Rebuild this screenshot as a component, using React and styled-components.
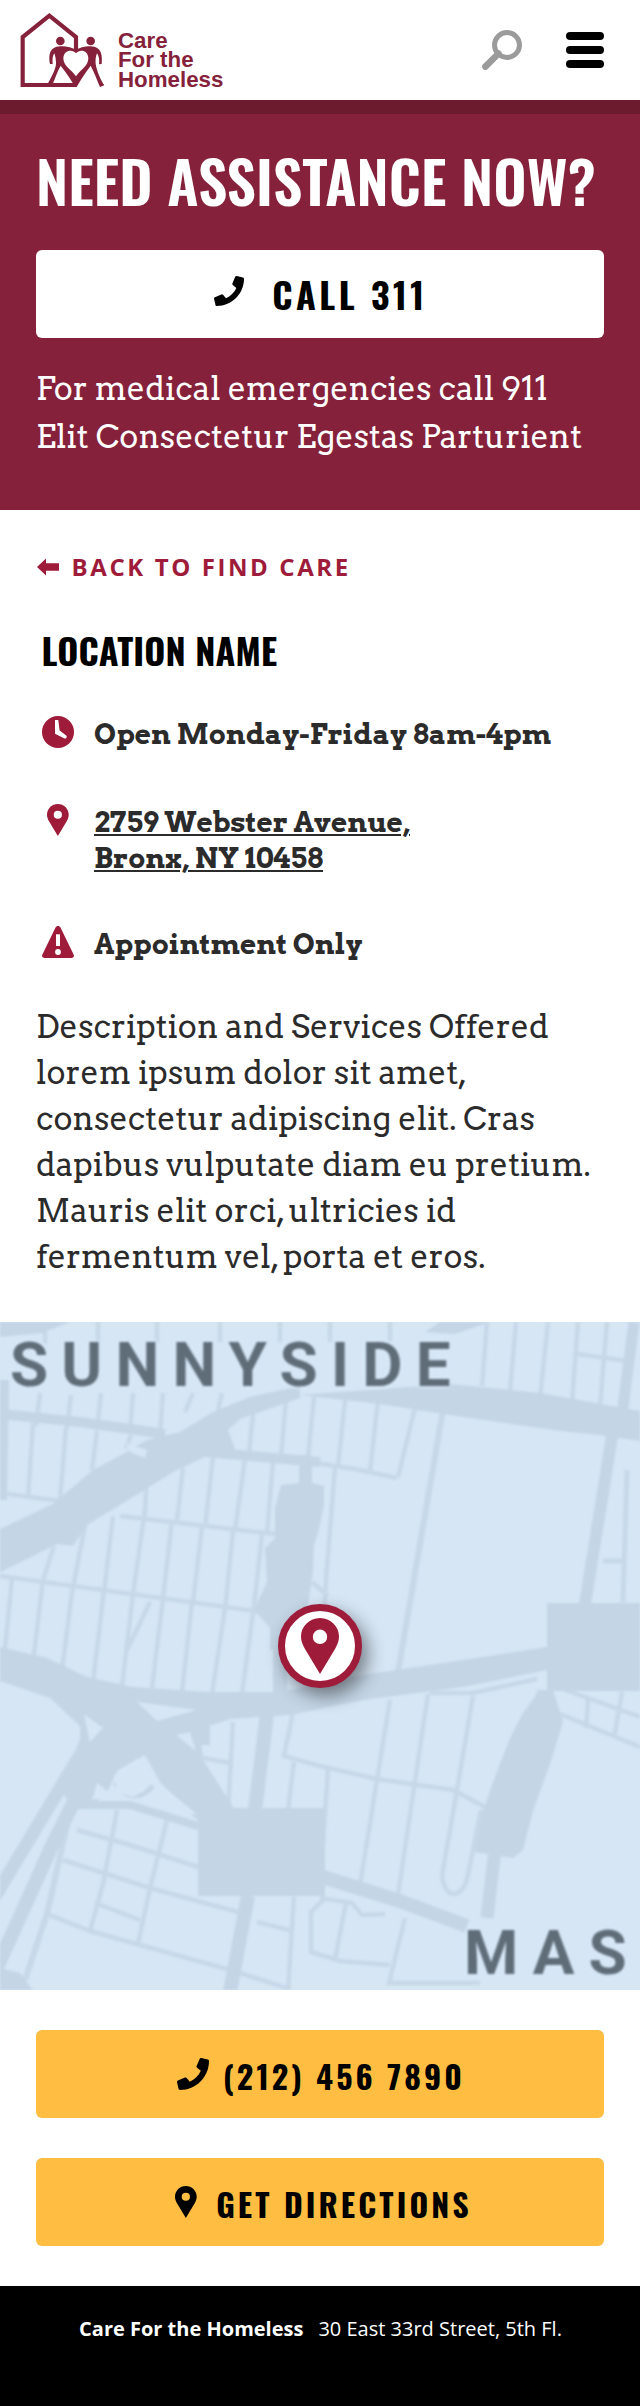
import React from "react";
import styled, { createGlobalStyle, ThemeProvider } from "styled-components";
import { FaPhone } from "react-icons/fa";

const theme = {
  maroon: "#85213a",
  maroonDark: "#6c1b2f",
  crimson: "#9e1b3a",
  gold: "#ffbe41",
  ink: "#2b2b2b",
  display: 'Oswald, "Liberation Sans Narrow", Roboto, sans-serif',
  slab: 'Arvo, "DejaVu Serif", serif',
  sans: '"Open Sans", "Noto Sans", sans-serif',
};

const GlobalStyle = createGlobalStyle`
  *, *::before, *::after { box-sizing: border-box; }
  body { margin: 0; background: #fff; }
  h1, h2, p, ul { margin: 0; padding: 0; }
  a { color: inherit; text-decoration: none; }
  svg { display: block; flex: none; }
`;

const Page = styled.div`
  width: 640px;
  display: flex;
  flex-direction: column;
`;

/* Header */
const Header = styled.header`
  height: 100px;
  padding: 0 36px 0 20px;
  display: flex;
  justify-content: space-between;
`;
const Brand = styled.a`
  display: flex;
  gap: 13px;
  color: ${(p) => p.theme.maroon};
`;
const BrandName = styled.span`
  padding-top: 30.5px;
  font: 700 22.3px/19.5px "Liberation Sans", Arial, sans-serif;
`;
const BrandLine = styled.span`
  display: block;
`;
const HeaderTools = styled.div`
  display: flex;
  align-items: center;
  gap: 44px;
`;
const IconButton = styled.button`
  padding: 0;
  border: 0;
  background: none;
`;
const MenuBars = styled.span`
  width: 38px;
  display: flex;
  flex-direction: column;
  gap: 5.5px;
`;
const MenuBar = styled.span`
  height: 8.4px;
  border-radius: 4.2px;
  background: #000;
`;

/* Assistance banner */
const Banner = styled.section`
  height: 410px;
  padding: 23px 36px 0;
  border-top: 14px solid ${(p) => p.theme.maroonDark};
  background: ${(p) => p.theme.maroon};
  color: #fff;
`;
const BannerTitle = styled.h1`
  font: 600 58px/86px ${(p) => p.theme.display};
  letter-spacing: 0.1px;
  white-space: nowrap;
`;
const BannerText = styled.p`
  margin-top: 27px;
  font: 400 32px/48px ${(p) => p.theme.slab};
`;

/* Buttons */
const Button = styled.a`
  height: 88px;
  padding-left: 2px;
  display: flex;
  align-items: center;
  justify-content: center;
  gap: ${(p) => (p.$call ? "28px" : "14px")};
  margin-top: ${(p) => (p.$call ? "27px" : "0")};
  border-radius: 6px;
  background: ${(p) => (p.$call ? "#fff" : p.theme.gold)};
  color: #000;
  font-family: ${(p) => p.theme.display};
  font-weight: 700;
  font-size: ${(p) => (p.$call ? "36px" : "32px")};
  letter-spacing: ${(p) => (p.$call ? "3.5px" : "3.1px")};
  white-space: nowrap;
`;
const ButtonIcon = styled.span`
  width: ${(p) => (p.$call ? "30px" : "32px")};
  display: flex;
  justify-content: center;
  padding-bottom: ${(p) => (p.$call ? "6px" : "0")};
`;
const ButtonLabel = styled.span`
  padding-top: ${(p) => (p.$call ? "0" : "3px")};
  padding-bottom: ${(p) => (p.$call ? "2px" : "0")};
`;

/* Location details */
const Details = styled.main`
  height: 812px;
  padding: 40px 36px 0;
  color: ${(p) => p.theme.ink};
`;
const BackLink = styled.a`
  display: flex;
  align-items: center;
  gap: 12.5px;
  padding-left: 1px;
  color: ${(p) => p.theme.crimson};
  font: 700 24px/33px ${(p) => p.theme.sans};
  letter-spacing: 2.6px;
`;
const LocationTitle = styled.h2`
  margin-top: 40px;
  padding-left: 5.5px;
  color: #000;
  font: 700 36px/54px ${(p) => p.theme.display};
  letter-spacing: 0.15px;
`;
const Facts = styled.ul`
  margin-top: 39px;
  padding-left: 6px;
  list-style: none;
`;
const Fact = styled.li`
  display: flex;
  gap: 20px;
  font: 700 28px/36px ${(p) => p.theme.slab};
  & + & { margin-top: 52px; }
  &:last-child { margin-top: 50px; }
`;
const FactIcon = styled.span`
  width: 32px;
  height: 32px;
  display: flex;
  justify-content: center;
  color: ${(p) => p.theme.crimson};
`;
const AddressLink = styled.a`
  text-decoration: underline;
  text-decoration-thickness: 2px;
  text-underline-offset: 2px;
`;
const Description = styled.p`
  margin-top: 42px;
  font: 400 32px/46px ${(p) => p.theme.slab};
`;

/* Map */
const Map = styled.section`
  position: relative;
  height: 668px;
  overflow: hidden;
  background: #d6e6f5;
`;
const Streets = styled.svg`
  filter: blur(1px);
`;
const MapLabel = styled.span`
  position: absolute;
  left: ${(p) => p.$x}px;
  top: ${(p) => p.$y}px;
  color: #5f6d79;
  font: 700 62px/62px Roboto, sans-serif;
  letter-spacing: ${(p) => p.$track}px;
  text-shadow: 0 0 5px #d6e6f5, 0 0 5px #d6e6f5;
  filter: blur(1.2px);
  white-space: nowrap;
`;
const Marker = styled.div`
  position: absolute;
  left: 278px;
  top: 282px;
  width: 84px;
  height: 84px;
  display: flex;
  align-items: center;
  justify-content: center;
  border: 7px solid ${(p) => p.theme.crimson};
  border-radius: 50%;
  background: #fff;
  color: ${(p) => p.theme.crimson};
  box-shadow: 6px 8px 18px rgba(0, 0, 0, 0.45);
`;

const Actions = styled.section`
  padding: 40px 36px;
  display: flex;
  flex-direction: column;
  gap: 40px;
`;

const Footer = styled.footer`
  height: 120px;
  padding: 29px 0 0 1px;
  display: flex;
  justify-content: center;
  gap: 15px;
  background: #000;
  color: #fff;
  font: 400 20px/28px ${(p) => p.theme.sans};
`;
const FooterName = styled.strong`
  font-weight: 700;
`;

const LogoMark = () => (
  <svg width="85" height="100" viewBox="60 0 255 300" fill="currentColor">
    <path
      d="M228 158V111L148 47 68 111V255H228"
      fill="none"
      stroke="currentColor"
      strokeWidth="12.5"
    />
    <circle cx="181" cy="123" r="13" />
    <circle cx="272" cy="123" r="13" />
    <path d="M150 192C145 165 149 140 181 139C205 139 218 144 228 150C238 144 250 139 272 139C304 140 308 165 305 192L297 193C299 180 297 168 291 160C287 170 286 180 287 192C291 215 302 240 313 256L300 261C291 240 282 215 272 197C260 213 243 238 230 261H226C212 238 195 213 182 197C172 215 165 235 159 250L144 250C158 225 168 205 168 190C168 178 166 168 163 160C157 168 157 180 158 192Z" />
    <path
      d="M228 229C215 210 190 198 190 175C191 150 218 147 228 160C239 147 264 150 265 175C265 198 241 210 228 229Z"
      fill="#fff"
    />
  </svg>
);

const SearchIcon = () => (
  <svg width="40" height="40" viewBox="0 0 40 40" fill="none" stroke="#9b9b9b">
    <circle cx="25" cy="15" r="12.5" strokeWidth="5" />
    <path d="M16.5 23.5L3.4 36.6" strokeWidth="6.6" strokeLinecap="round" />
  </svg>
);

const PinIcon = ({ height }) => (
  <svg width={(height * 38) / 56} height={height} viewBox="0 0 38 56" fill="currentColor">
    <path
      fillRule="evenodd"
      d="M19 0C8.500 0 0 8.300 0 18.600C0 23 1.500 26.500 4 31L19 56L34 31C36.500 26.500 38 23 38 18.600C38 8.300 29.500 0 19 0ZM19 11.600A7.200 7.200 0 1 1 19 26A7.200 7.200 0 1 1 19 11.600Z"
    />
  </svg>
);

const ArrowIcon = () => (
  <svg width="22" height="18" viewBox="0 0 22 18" fill="currentColor">
    <path d="M0 9L9 0.500V5.300H22V12.800H9V17.500Z" />
  </svg>
);

const ClockIcon = () => (
  <svg width="32" height="32" viewBox="0 0 32 32" fill="currentColor">
    <circle cx="16" cy="16" r="16" />
    <path d="M13 4H16.300L17.600 14.500L24.200 19.600Q25.200 20.500 24.500 21.700Q23.700 22.900 22.500 22.400L13 17.700Z" fill="#fff" />
  </svg>
);

const WarningIcon = () => (
  <svg width="32" height="32" viewBox="0 0 32 32" fill="currentColor">
    <path d="M16 0C17 0 18 .6 18.600 1.700L31.600 28.500C32.600 30.500 31.300 32 29.500 32H2.500C.7 32-.6 30.500.4 28.500L13.400 1.700C14 .6 15 0 16 0Z" />
    <path d="M14 8.300H18V20H14Z" fill="#fff" />
    <circle cx="16" cy="26" r="2.900" fill="#fff" />
  </svg>
);

const StreetMap = () => (
  <Streets width="640" height="668" viewBox="0 2 640 668" fill="none" stroke="#c4d5e5">
    {/* minor streets */}
    <g strokeWidth="4.500" opacity="0.8">
      <path d="M40 73L36 106M71 75L67 108M101 73L97 110M133 73L130 112M163 73L160 112M193 73L185 92M222 73L218 90" />
      <path d="M45 2V24M98 2V22M157 2V22M220 2V22M280 2V22M330 2V22M390 2V22" />
      <path d="M33 103L28 178M66 107L60 180M97 111L92 150M131 115L126 128M183 148L177 200M213 137L205 207M245 139L235 210M273 142L267 213M146 168L145 195" />
      <path d="M0 173L60 181M120 196L275 214M0 256L262 292" />
      <path d="M54 226L43 260M85 205L73 268M113 196L104 272M145 190L133 274M172 200L163 278M202 207L193 282M233 211L225 290M262 214L253 295" />
      <path d="M12 258L5 329M43 260L33 342M73 265L62 350M104 270L93 362M133 274L122 366M163 278L152 368M192 282L182 372M225 288L212 374M253 292L242 374M150 282L127 330" />
      <path d="M253 94L249 134M286 80L281 137M314 77L308 138M345 80L338 147M378 80L370 151M415 88L398 157M310 142L355 149L397 158M335 147L326 260L321 350M312 262L328 276" />
      <path d="M487 2L482 66M516 2L510 72M548 2L540 78M578 2L572 82M607 2L600 86M577 34L627 41" />
      <path d="M443 90L397 358" strokeWidth="6" />
      <path d="M627 150L623 282M603 241H623" strokeWidth="5" />
      <path d="M233 402L228 490M203 438L230 443M293 392L284 436L320 446L377 459L453 470L485 487M294 442L288 490M328 450L321 552" />
      <path d="M390 380L360 565M428 374L398 575M473 376L457 470L442 555Q444 573 454 574Q464 573 468 555L481 490M430 373H473L537 359M540 370L530 394" />
      <path d="M560 394L640 427M560 368L640 397M588 380L586 408M622 372L614 418" />
      <path d="M77 510L130 525L198 547M63 540L150 568L245 594M95 583L140 600M47 594L90 611L230 650L290 669M117 490L103 564L90 611M167 500L150 568L138 624" />
      <path d="M67 505L47 594L25 660" strokeWidth="6" />
      <path d="M294 577L288 670M257 602L293 611M325 578L311 592V632L340 641L390 645M320 578L352 583L362 595L385 594M346 583L335 639M405 598L389 663H480" />
    </g>
    {/* avenues */}
    <g strokeWidth="10">
      <path d="M4 60L2 180M0 94L80 102L165 114M205 132L320 142" />
      <path d="M613 110L585 284" strokeWidth="12" />
      <path d="M634 2L622 95" strokeWidth="11" />
      <path d="M267 394L255 490M248 576L230 672" strokeWidth="14" />
      <path d="M495 530L487 598" strokeWidth="13" />
      <path d="M320 556L400 581L467 606" strokeWidth="14" />
      <path d="M305 135V170" strokeWidth="12" />
      <path d="M280 290V375" strokeWidth="14" />
      <path d="M86 425L-6 578" strokeWidth="13" />
      <path d="M97 435L50 530L-6 654" strokeWidth="14" />
      <path d="M75 485H130L198 506" strokeWidth="8" />
      <path d="M115 462Q132 488 153 466M87 402L84 425" strokeWidth="5" />
      <path d="M205 400V425" strokeWidth="10" />
    </g>
    {/* highways, parks and blocks */}
    <g fill="#c4d5e5" stroke="none">
      <path d="M0 209L53 184 93 150 127 132 147 120 180 112 213 92 250 77 300 66 300 78 240 99 228 110 236 132 207 136 173 152 133 177 87 205 73 226 57 224 27 239 0 252Z" />
      <path d="M0 2H70L42 13 0 17ZM440 2H490L455 14 425 12Z" />
      <path d="M300 75L450 64 540 73 640 91V121L600 115 560 111 450 95 380 84Z" />
      <path d="M300 137H312V163L324 166 324 185 318 213 314 225 313 250 308 285 310 320 270 330 270 308 254 290 267 262 265 228 275 218 275 188 281 165 300 163Z" />
      <path d="M0 327L47 338 87 357 133 367 207 372 280 372 363 355 463 340 547 327V350L463 367 363 380 290 395 230 399 200 409 203 440 235 490 197 500 160 462 145 435 118 450 108 470 92 486 75 490 60 470 80 419 80 406 50 378 0 361Z" />
      <path d="M547 283H640V371H547ZM198 488H325V576H198Z" />
      <path d="M540 370H553L563 402 550 444 533 491 523 530 513 538 475 532 480 500 493 462 510 418 523 393Z" />
      <path d="M0 648L20 653 34 672H0Z" />
    </g>
    {/* islands between the ramps */}
    <g fill="#d6e6f5" stroke="none">
      <path d="M137 382L197 390 157 401Z" />
      <path d="M176 415L190 412 196 431Z" />
      <path d="M84 394L103 408 90 422Z" />
      <path d="M137 439L147 448 146 470 133 477 117 472 114 455Z" />
      <path d="M97 463L112 475 92 480Z" />
      <path d="M165 468L198 495 163 488Z" />
      <path d="M125 123L147 130 145 138 132 133Z" />
    </g>
  </Streets>
);

export default function App() {
  return (
    <ThemeProvider theme={theme}>
      <GlobalStyle />
      <Page>
        <Header>
          <Brand href="#">
            <LogoMark />
            <BrandName>
              <BrandLine>Care</BrandLine>
              <BrandLine>For the</BrandLine>
              <BrandLine>Homeless</BrandLine>
            </BrandName>
          </Brand>
          <HeaderTools>
            <IconButton aria-label="Search">
              <SearchIcon />
            </IconButton>
            <IconButton aria-label="Menu">
              <MenuBars>
                <MenuBar />
                <MenuBar />
                <MenuBar />
              </MenuBars>
            </IconButton>
          </HeaderTools>
        </Header>

        <Banner>
          <BannerTitle>NEED ASSISTANCE NOW?</BannerTitle>
          <Button $call href="tel:311">
            <ButtonIcon $call>
              <FaPhone size={30} />
            </ButtonIcon>
            <ButtonLabel $call>CALL 311</ButtonLabel>
          </Button>
          <BannerText>
            For medical emergencies call 911
            <br />
            Elit Consectetur Egestas Parturient
          </BannerText>
        </Banner>

        <Details>
          <BackLink href="#">
            <ArrowIcon />
            BACK TO FIND CARE
          </BackLink>
          <LocationTitle>LOCATION NAME</LocationTitle>
          <Facts>
            <Fact>
              <FactIcon>
                <ClockIcon />
              </FactIcon>
              <span>Open Monday-Friday 8am-4pm</span>
            </Fact>
            <Fact>
              <FactIcon>
                <PinIcon height={32} />
              </FactIcon>
              <AddressLink href="#">
                2759 Webster Avenue,
                <br />
                Bronx, NY 10458
              </AddressLink>
            </Fact>
            <Fact>
              <FactIcon>
                <WarningIcon />
              </FactIcon>
              <span>Appointment Only</span>
            </Fact>
          </Facts>
          <Description>
            Description and Services Offered lorem ipsum dolor sit amet, consectetur adipiscing
            elit. Cras dapibus vulputate diam eu pretium. Mauris elit orci, ultricies id fermentum
            vel, porta et eros.
          </Description>
        </Details>

        <Map>
          <StreetMap />
          <MapLabel $x={10} $y={12} $track={13.2}>
            SUNNYSIDE
          </MapLabel>
          <MapLabel $x={464} $y={600} $track={14}>
            MAS
          </MapLabel>
          <Marker>
            <PinIcon height={56} />
          </Marker>
        </Map>

        <Actions>
          <Button href="tel:2124567890">
            <ButtonIcon>
              <FaPhone size={32} />
            </ButtonIcon>
            <ButtonLabel>(212) 456 7890</ButtonLabel>
          </Button>
          <Button href="#">
            <ButtonIcon>
              <PinIcon height={32} />
            </ButtonIcon>
            <ButtonLabel>GET DIRECTIONS</ButtonLabel>
          </Button>
        </Actions>

        <Footer>
          <FooterName>Care For the Homeless</FooterName>
          <span>30 East 33rd Street, 5th Fl.</span>
        </Footer>
      </Page>
    </ThemeProvider>
  );
}
